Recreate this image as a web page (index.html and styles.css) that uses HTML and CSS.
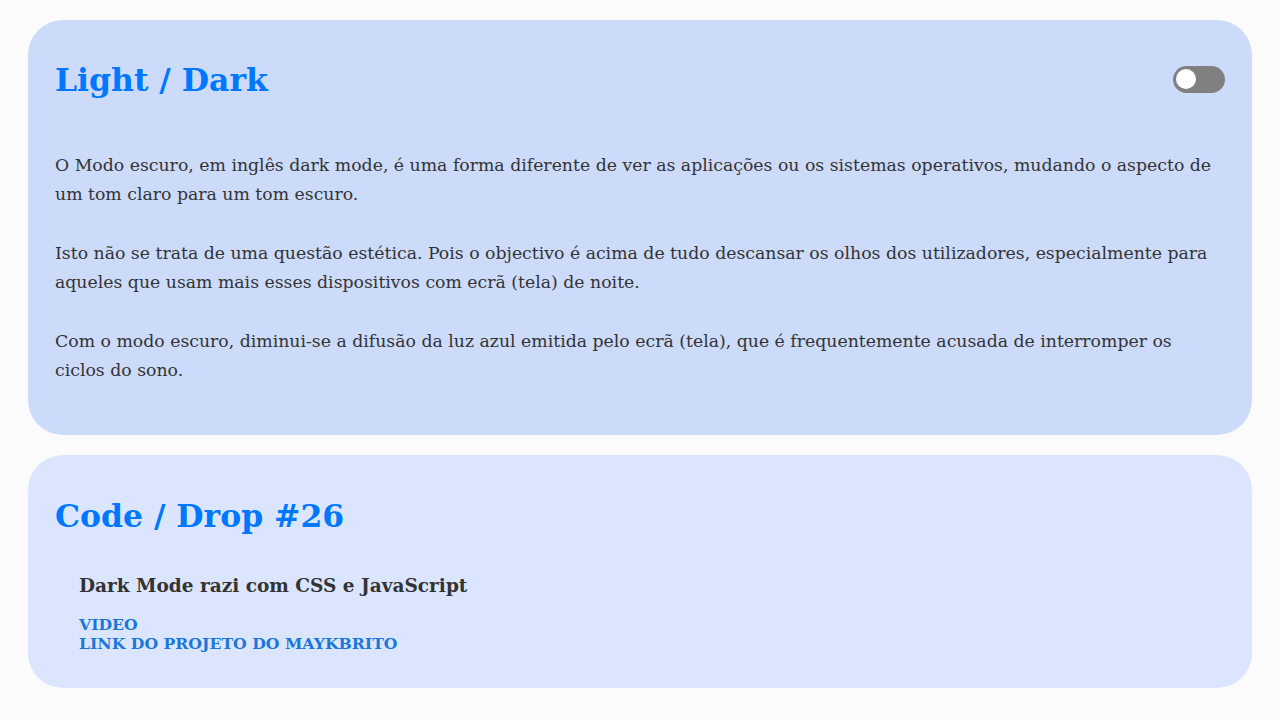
FILE: index.html
```html
<!DOCTYPE html>
<html lang="pt">
<head>
<meta charset="utf-8">
<title>Light / Dark</title>
<link rel="stylesheet" href="styles.css">
</head>
<body>
<main class="page">
  <section class="card card-main">
    <header class="card-head">
      <h1 class="title">Light / Dark</h1>
      <label class="switch" aria-label="Alternar tema">
        <span class="knob"></span>
      </label>
    </header>
    <div class="text">
      <p>O Modo escuro, em inglês dark mode, é uma forma diferente de ver as aplicações ou os sistemas operativos, mudando o aspecto de um tom claro para um tom escuro.</p>
      <p>Isto não se trata de uma questão estética. Pois o objectivo é acima de tudo descansar os olhos dos utilizadores, especialmente para aqueles que usam mais esses dispositivos com ecrã (tela) de noite.</p>
      <p>Com o modo escuro, diminui-se a difusão da luz azul emitida pelo ecrã (tela), que é frequentemente acusada de interromper os ciclos do sono.</p>
    </div>
  </section>
  <section class="card card-info">
    <header class="card-head">
      <h1 class="title">Code / Drop #26</h1>
    </header>
    <div class="info">
      <h3 class="info-title">Dark Mode razi com CSS e JavaScript</h3>
      <div class="links">
        <a class="link" href="#">VIDEO</a>
        <a class="link" href="#">LINK DO PROJETO DO MAYKBRITO</a>
      </div>
    </div>
  </section>
</main>
</body>
</html>
```
FILE: styles.css
```css
* { box-sizing: border-box; }
html, body { margin: 0; padding: 0; }
body {
  background: #fbfbfb;
  font-family: "DejaVu Serif", serif;
  color: #333333;
}
.page {
  display: flex;
  flex-direction: column;
  gap: 20px;
  padding: 20px 28px;
}
.card {
  border-radius: 35px;
  padding: 27px 27px;
}
.card-main { background: #cddbfb; padding-top: 26px; padding-bottom: 50px; }
.card-info { background: #dbe6fe; padding-top: 27px; padding-bottom: 35px; }
.card-head {
  display: flex;
  align-items: center;
  justify-content: space-between;
  height: 66px;
}
.title {
  margin: 0;
  font-size: 31.45px;
  font-weight: bold;
  color: #0077ff;
  line-height: 37px;
}
.switch {
  display: flex;
  align-items: center;
  width: 52px;
  height: 27px;
  border-radius: 14px;
  background: #808080;
  padding: 0 3px;
}
.knob {
  width: 20px;
  height: 20px;
  border-radius: 50%;
  background: #ffffff;
}
.text {
  padding-top: 39px;
}
.text p {
  margin: 0 0 30px;
  font-size: 17.3px;
  line-height: 29px;
}
.text p:last-child { margin-bottom: 0; }
.info {
  padding: 27px 0 0 24px;
}
.info-title {
  margin: 0;
  font-size: 18.5px;
  font-weight: bold;
  line-height: 22px;
  color: #333333;
}
.links {
  display: flex;
  flex-direction: column;
  padding-top: 18px;
}
.link {
  font-size: 15.7px;
  font-weight: bold;
  line-height: 19px;
  color: #1a77d9;
  text-decoration: none;
}
```
